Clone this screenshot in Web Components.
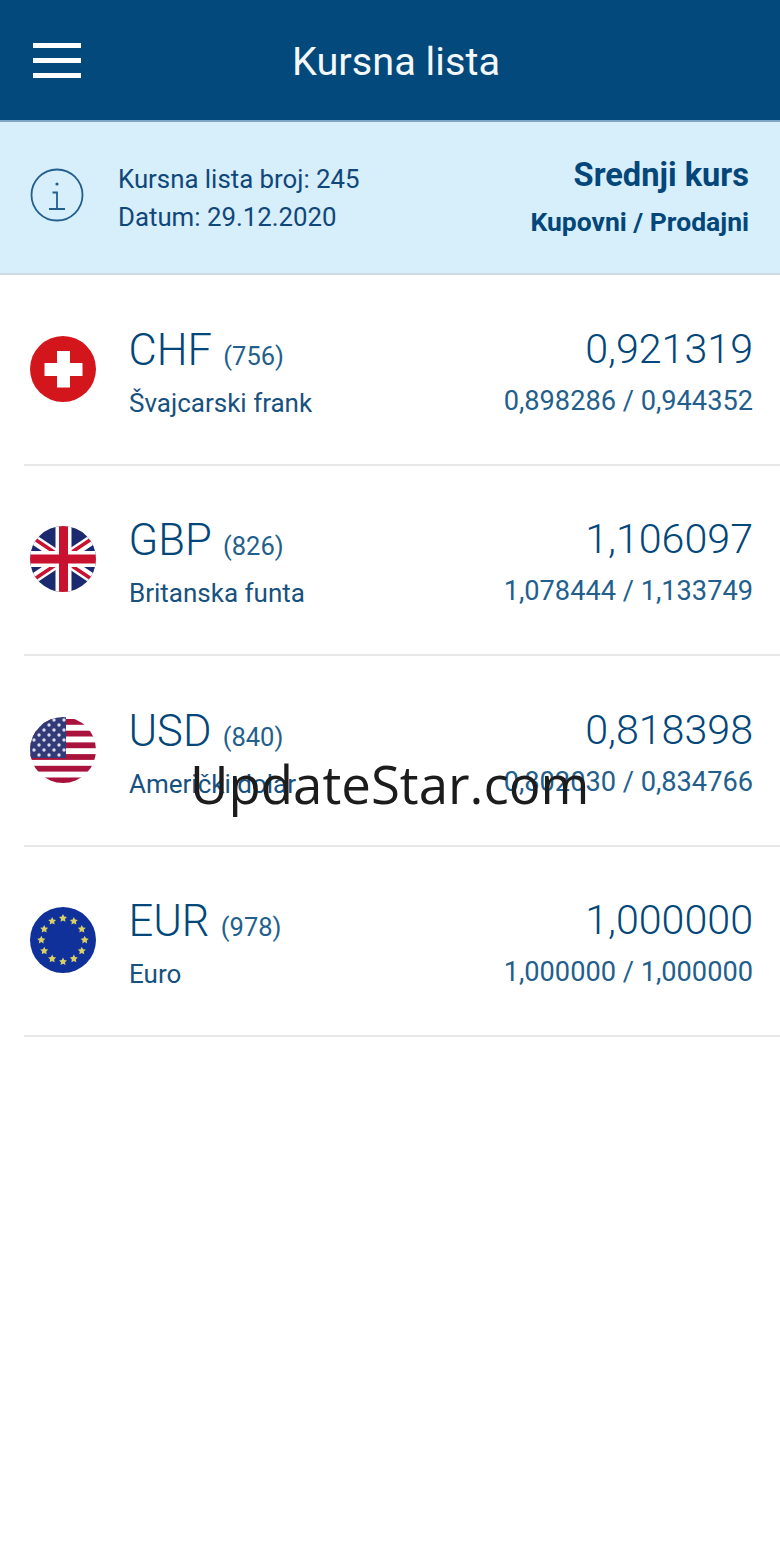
<!DOCTYPE html>
<html lang="sr"><head><meta charset="utf-8"><title>Kursna lista</title>
<style>
html,body{margin:0;padding:0;background:#fff}
body{width:780px;height:1560px;overflow:hidden;font-family:Roboto,"Liberation Sans",sans-serif}
</style></head><body>
<app-screen>
  <app-header title="Kursna lista"></app-header>
  <list-banner number="245" date="29.12.2020"></list-banner>
  <rate-row code="CHF" num="756" name="Švajcarski frank" mid="0,921319" range="0,898286 / 0,944352" flag="ch"></rate-row>
  <rate-row code="GBP" num="826" name="Britanska funta" mid="1,106097" range="1,078444 / 1,133749" flag="gb"></rate-row>
  <rate-row code="USD" num="840" name="Američki dolar" mid="0,818398" range="0,802030 / 0,834766" flag="us"></rate-row>
  <rate-row code="EUR" num="978" name="Euro" mid="1,000000" range="1,000000 / 1,000000" flag="eu"></rate-row>
  <water-mark>UpdateStar.com</water-mark>
</app-screen>
<script>
const star=(cx,cy,r,fill)=>{let p=[];for(let i=0;i<10;i++){const a=-Math.PI/2+i*Math.PI/5,q=i%2?r*.5:r;p.push((cx+q*Math.cos(a)).toFixed(2)+','+(cy+q*Math.sin(a)).toFixed(2));}return `<polygon points="${p.join(' ')}" fill="${fill}"/>`;};
const flags={
ch:()=>`<rect width="66" height="66" fill="#d3161c"/><path d="M27 15h13v12h12.500v13h-12.500v11.500h-13v-11.500h-12.500v-13h12.500z" fill="#fff"/>`,
gb:()=>`<rect width="66" height="66" fill="#1b2a6e"/>
<path d="M0 11L66 55M66 11L0 55" stroke="#fff" stroke-width="10"/>
<path d="M3 12L27 28M39 38L63 54" stroke="#c8122f" stroke-width="3.500"/>
<path d="M63 12L39 28M27 38L3 54" stroke="#c8122f" stroke-width="3.500"/>
<rect x="25.500" width="16" height="66" fill="#fff"/><rect y="25" width="66" height="16" fill="#fff"/>
<rect x="29" width="9" height="66" fill="#c8122f"/><rect y="28.500" width="66" height="9" fill="#c8122f"/>`,
us:()=>{let s='<rect width="66" height="66" fill="#fff"/>';for(let i=0;i<6;i++)s+=`<rect y="${2+i*11.7}" width="66" height="5.800" fill="#a8123c"/>`;
s+='<rect x="0" width="36" height="41" fill="#333a78"/>';
const ys=[3,8,13,18,23,28,33,38];ys.forEach((y,i)=>{for(let x=i%2?9:4;x<36;x+=10)s+=`<circle cx="${x}" cy="${y}" r="1.700" fill="#dcdcee"/>`;});return s;},
eu:()=>{let s='<rect width="66" height="66" fill="#10309a"/>';for(let i=0;i<12;i++){const a=i*Math.PI/6;s+=star(33+21.7*Math.cos(a),33+21.7*Math.sin(a),4.200,'#d9d263');}return s;}
};
class Base extends HTMLElement{
  render(html){this.attachShadow({mode:'open'}).innerHTML=html;}
}
customElements.define('app-screen',class extends Base{connectedCallback(){this.render(`<style>:host{display:flex;flex-direction:column;position:relative;width:780px;height:1560px;background:#fff;color:#03477a}</style><slot></slot>`);}});
customElements.define('app-header',class extends Base{connectedCallback(){this.render(`<style>
:host{display:flex;align-items:center;box-sizing:border-box;height:122px;background:#03497c;border-bottom:2px solid #7ea6c4}
.m{display:flex;flex-direction:column;gap:10px;margin-left:33px;width:48px}
.m i{display:block;height:5px;background:#fff}
h1{margin:3px 0 0 211px;font:400 39.700px Roboto,sans-serif;color:#f4f8fb}
</style><div class="m"><i></i><i></i><i></i></div><h1>${this.getAttribute('title')}</h1>`);}});
customElements.define('list-banner',class extends Base{connectedCallback(){this.render(`<style>
:host{display:flex;align-items:center;box-sizing:border-box;height:153px;background:#d7eefb;border-bottom:2px solid #cfdbe3;padding:0 31px 0 30px}
svg{width:54px;height:54px;flex:none;margin-top:-6px}
.l{margin-left:34px;font-size:25.800px;line-height:38px;color:#10477a;flex:1;margin-top:1px;font-weight:400}
.r{text-align:right;color:#03477a;font-weight:700}
.a{font-size:32.600px;line-height:38px;margin-top:-2px}
.b{font-size:26.500px;line-height:30px;margin-top:13px}
</style><svg viewBox="0 0 54 54" fill="none" stroke="#235f8d" stroke-width="1.800"><circle cx="27" cy="27" r="25.500"/><path d="M22.500 24.500h4.500v16M19 41h16"/><circle cx="27" cy="16" r="1.600" fill="#235f8d" stroke="none"/></svg>
<div class="l"><div>Kursna lista broj: ${this.getAttribute('number')}</div><div>Datum: ${this.getAttribute('date')}</div></div>
<div class="r"><div class="a">Srednji kurs</div><div class="b">Kupovni / Prodajni</div></div>`);}});
customElements.define('rate-row',class extends Base{connectedCallback(){const g=this.getAttribute.bind(this),id=g('flag');this.render(`<style>
:host{display:block;height:190.500px;box-sizing:border-box;padding-left:24px}
.w{box-sizing:border-box;height:190.500px;display:flex;align-items:center;border-bottom:2px solid #e6e8ea;padding:0 27px 0 6px}
svg{width:66px;height:66px;flex:none;border-radius:50%;margin-top:-1px}
.t{margin-left:33px;flex:1;margin-top:-1px}
.c{font-size:43.500px;line-height:50px;color:#03477a;font-weight:300;padding-top:6px;margin-left:-.5px}
.n{font-size:25.500px;color:#235f8d;margin-left:5px;font-weight:400}
.d{font-size:26px;line-height:30px;margin-top:7px;color:#17517f}
.v{text-align:right;margin-top:-1px}
.m{font-size:41.200px;line-height:50px;color:#03477a;font-weight:300;padding-top:2px}
.x{font-size:27.200px;line-height:30px;margin-top:12px;color:#235f8d;font-weight:400}
</style><div class="w"><svg viewBox="0 0 66 66">${flags[id]()}</svg>
<div class="t"><div class="c">${g('code')}<span class="n"> (${g('num')})</span></div><div class="d">${g('name')}</div></div>
<div class="v"><div class="m">${g('mid')}</div><div class="x">${g('range')}</div></div></div>`);}});
customElements.define('water-mark',class extends Base{connectedCallback(){this.render(`<style>
:host{position:absolute;left:190px;top:749px;font:400 52.800px/70px "Open Sans",sans-serif;color:#1c1c1c;white-space:nowrap}
</style><slot></slot>`);}});
</script></body></html>
